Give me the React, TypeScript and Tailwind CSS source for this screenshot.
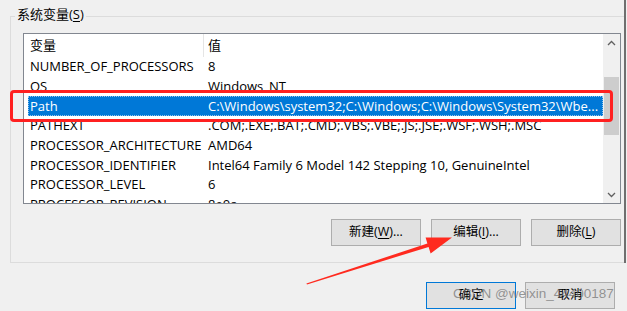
import React from "react";

const rows = [
  { name: "NUMBER_OF_PROCESSORS", value: "8" },
  { name: "OS", value: "Windows_NT" },
  { name: "Path", value: "C:\\Windows\\system32;C:\\Windows;C:\\Windows\\System32\\Wbe...", selected: true },
  { name: "PATHEXT", value: ".COM;.EXE;.BAT;.CMD;.VBS;.VBE;.JS;.JSE;.WSF;.WSH;.MSC" },
  { name: "PROCESSOR_ARCHITECTURE", value: "AMD64" },
  { name: "PROCESSOR_IDENTIFIER", value: "Intel64 Family 6 Model 142 Stepping 10, GenuineIntel" },
  { name: "PROCESSOR_LEVEL", value: "6" },
  { name: "PROCESSOR_REVISION", value: "8e0a" },
];

const Chevron = ({ up }: { up?: boolean }) => (
  <svg width="9" height="6" viewBox="0 0 9 6">
    <polyline
      points={up ? "1,5 4.5,1.5 8,5" : "1,1 4.5,4.5 8,1"}
      fill="none"
      stroke="#606060"
      strokeWidth="1.3"
    />
  </svg>
);

const WinButton = ({ label, hotkey, tail, primary }: { label: string; hotkey?: string; tail?: string; primary?: boolean }) => (
  <button
    className={
      "w-[90px] h-[27px] bg-[#e1e1e1] border text-[12.5px] flex items-center justify-center " +
      (primary ? "border-[#0078d7]" : "border-[#adadad]")
    }
  >
    {label}
    {hotkey && (
      <>
        (<span className="underline underline-offset-2">{hotkey}</span>)
      </>
    )}
    {tail}
  </button>
);

export default function App() {
  return (
    <div className="relative w-[627px] h-[311px] overflow-hidden bg-[#f0f0f0] text-black font-['Open_Sans','Noto_Sans_CJK_SC',sans-serif] text-[13px] leading-none">
      {/* system variables group */}
      <div className="w-[626px] h-[263px] border-r-2 border-[#6f6f6f] pt-[16px] pl-[10px]">
        <div className="relative h-[247px] border-l border-t border-b border-[#dcdcdc] pl-[12px] pt-[16px] pr-[3px]">
          <div className="absolute left-[4px] top-[-9px] bg-[#f0f0f0] px-[2px] text-[13px]">
            系统变量(<span className="underline underline-offset-2">S</span>)
          </div>

          <div className="w-[598px] h-[171px] border border-[#828790] bg-white flex overflow-hidden">
            <div className="flex-1 flex flex-col overflow-hidden">
              <div className="h-[23px] shrink-0 flex items-center">
                <div className="w-[180px] h-full flex items-center pl-[6px] border-r border-[#e5e5e5]">变量</div>
                <div className="pl-[4px]">值</div>
              </div>
              {rows.map((r) => (
                <div
                  key={r.name}
                  className={
                    "h-[19.67px] shrink-0 ml-[4px] flex items-center whitespace-nowrap " +
                    (r.selected ? "bg-[#0078d7] text-white outline outline-dotted outline-[#8fc3ee] -outline-offset-1" : "")
                  }
                >
                  <div className="w-[180px] pl-[2px]">{r.name}</div>
                  <div>{r.value}</div>
                </div>
              ))}
            </div>
            <div className="w-[17px] shrink-0 bg-[#f0f0f0] flex flex-col">
              <div className="h-[17px] flex items-center justify-center">
                <Chevron up />
              </div>
              <div className="h-[26px]" />
              <div className="h-[58px] mx-[1px] bg-[#cdcdcd]" />
              <div className="flex-1" />
              <div className="h-[17px] flex items-center justify-center">
                <Chevron />
              </div>
            </div>
          </div>

          <div className="mt-[15px] flex justify-end gap-[10px]">
            <WinButton label="新建" hotkey="W" tail="..." />
            <WinButton label="编辑" hotkey="I" tail="..." />
            <WinButton label="删除" hotkey="L" />
          </div>
        </div>
      </div>

      {/* dialog buttons */}
      <div className="pt-[19px] pl-[426px] flex gap-[9px]">
        <WinButton label="确定" primary />
        <WinButton label="取消" />
      </div>

      {/* annotation: red highlight box */}
      <div className="absolute left-[10px] top-[90px] w-[603px] h-[32px] border-[3px] border-[#ff2020] rounded-[4px]" />

      {/* annotation: arrow */}
      <svg className="absolute inset-0 pointer-events-none" width="627" height="311" viewBox="0 0 627 311">
        <polygon
          points="307,284.5 428.6,246.9 430.6,253.5 452,237.5 425.6,237.6 427.4,243.5 306.4,283.4"
          fill="#ff2a1f"
        />
      </svg>

      {/* watermark */}
      <div className="absolute left-[453px] top-[287px] text-[13.5px] font-['Liberation_Sans',sans-serif] text-[rgba(110,110,110,0.7)] whitespace-nowrap">
        CSDN @weixin_44400187
      </div>
    </div>
  );
}
